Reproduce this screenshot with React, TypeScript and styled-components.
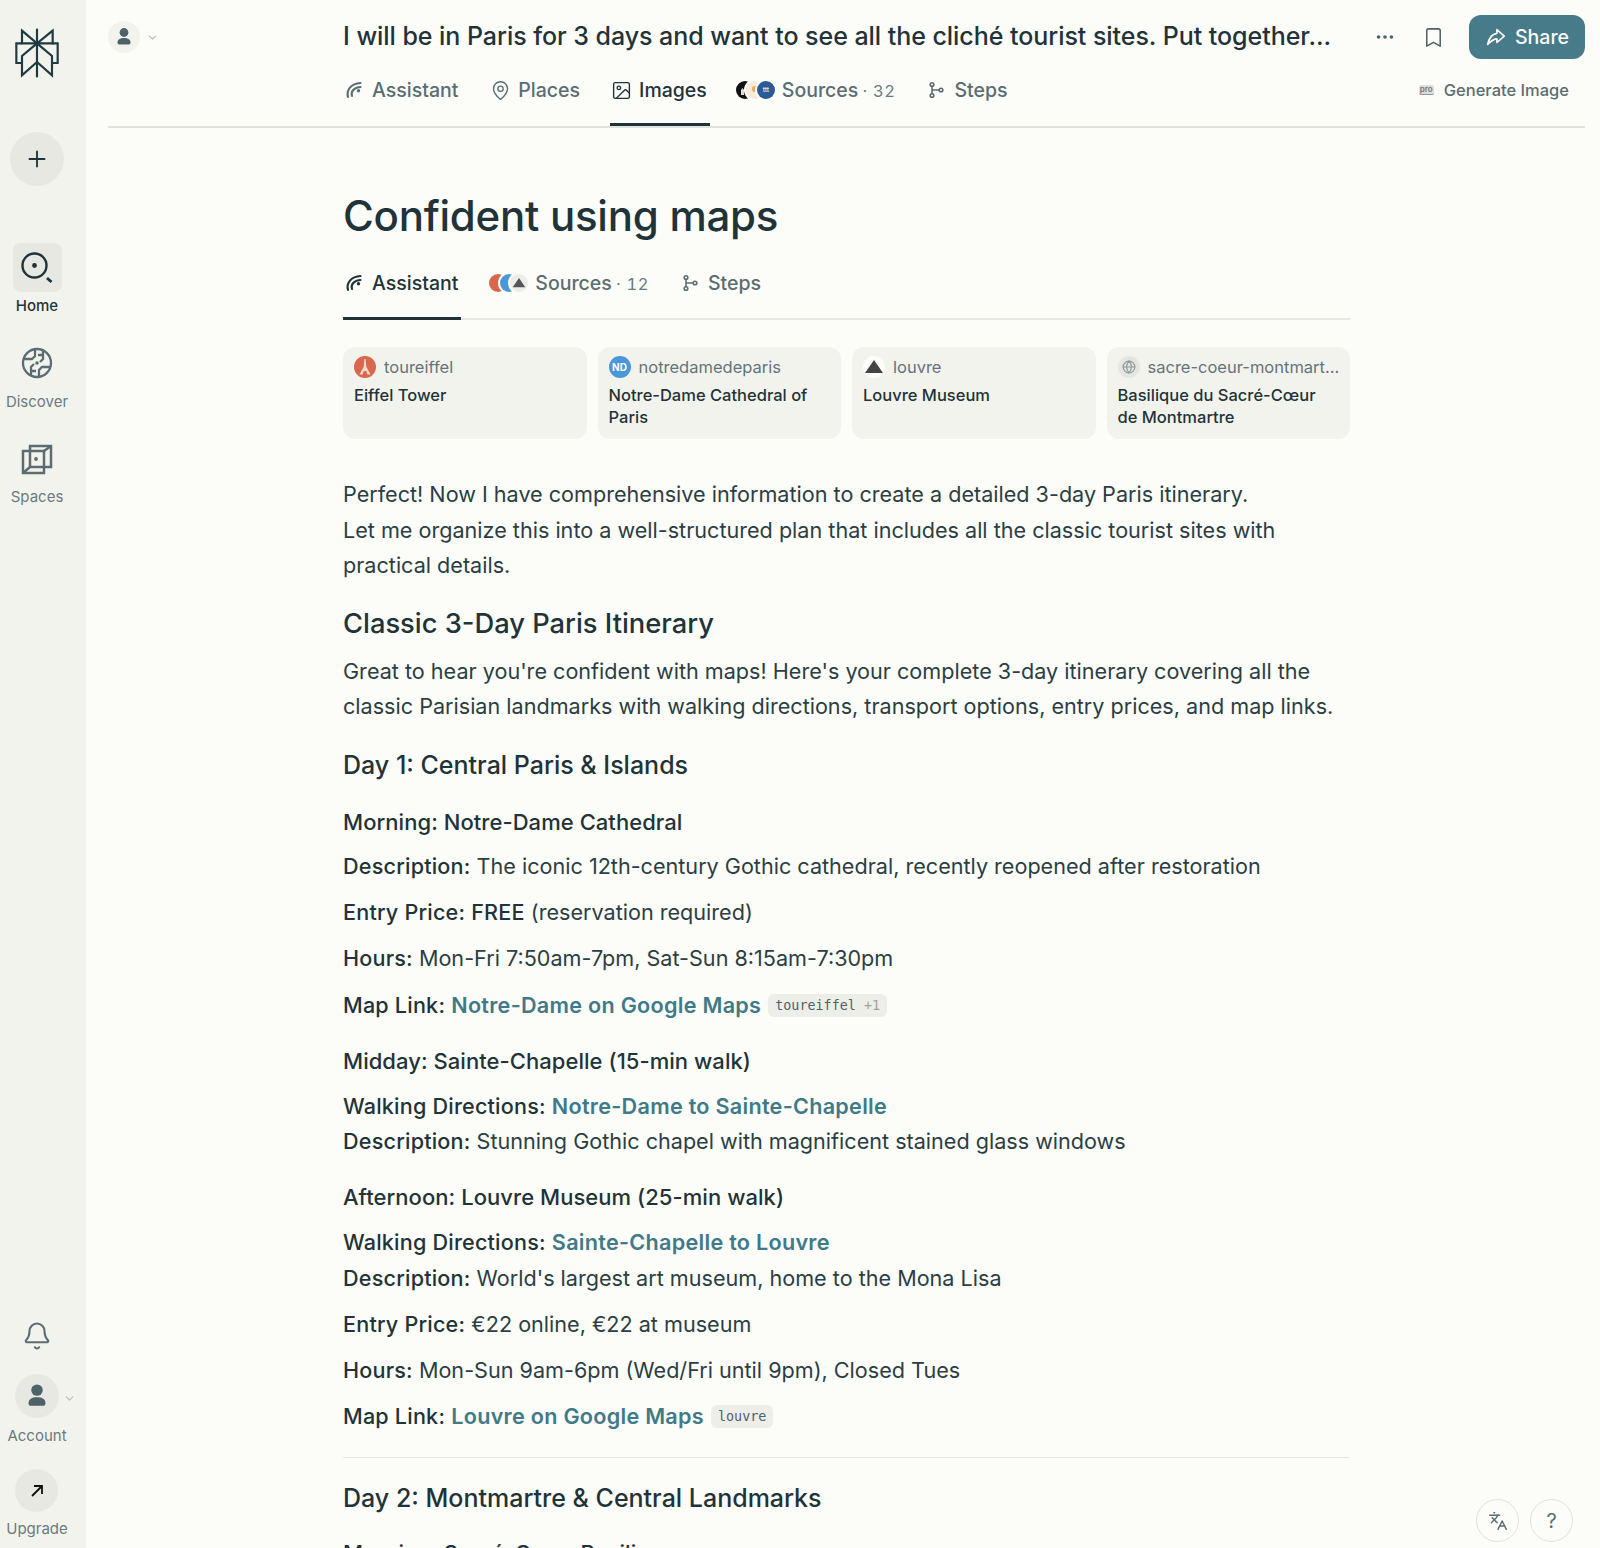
import React from "react"
import styled, { createGlobalStyle } from "styled-components"
import { Bell, Bookmark, ChevronDown, Ellipsis, Globe, Image, Languages, MapPin, Plus } from "lucide-react"

const GlobalStyle = createGlobalStyle`
  html, body {
    margin: 0;
    padding: 0;
    height: 1548px;
    overflow: hidden;
    background: #fcfcf9;
  }
  * { box-sizing: border-box; }
  body {
    font-family: Inter, "Liberation Sans", sans-serif;
    color: #1f3338;
  }
`

const Page = styled.div`
  display: flex;
  height: 1548px;
  overflow: hidden;
`

const Sidebar = styled.aside`
  position: relative;
  flex: 0 0 86px;
  display: flex;
  flex-direction: column;
  align-items: center;
  padding: 28px 12px 6px 0;
  background: #f3f3ee;
`

const Logo = styled.svg`
  display: block;
  width: 44px;
  height: 50px;
`

const NewButton = styled.div`
  display: flex;
  align-items: center;
  justify-content: center;
  width: 54px;
  height: 54px;
  margin-top: 54px;
  border-radius: 50%;
  background: #e8e8e3;
  color: #1f3338;
`

const Nav = styled.nav`
  display: flex;
  flex-direction: column;
  gap: 22.5px;
  margin-top: 57px;
`

const NavItem = styled.div`
  display: flex;
  flex-direction: column;
  align-items: center;
  gap: 4px;
`

const NavIcon = styled.div<{ $active?: boolean }>`
  display: flex;
  align-items: center;
  justify-content: center;
  width: 49px;
  height: 49px;
  border-radius: 8px;
  background: ${({ $active }) => ($active ? "#e8e8e3" : "transparent")};
  color: ${({ $active }) => ($active ? "#1f3338" : "#5b6d72")};
`

const NavLabel = styled.span<{ $active?: boolean }>`
  font-size: 15px;
  line-height: 20px;
  font-weight: ${({ $active }) => ($active ? 500 : 400)};
  color: ${({ $active }) => ($active ? "#1f3338" : "#6b7a7e")};
  white-space: nowrap;
`

const SideBottom = styled.div`
  display: flex;
  flex-direction: column;
  align-items: center;
  margin-top: auto;
`

const BellBox = styled.div`
  display: flex;
  align-items: center;
  justify-content: center;
  height: 40px;
  margin-bottom: 18px;
  color: #5b6d72;
`

const RoundIcon = styled.div<{ $size: number }>`
  display: flex;
  align-items: center;
  justify-content: center;
  width: ${({ $size }) => $size}px;
  height: ${({ $size }) => $size}px;
  border-radius: 50%;
  background: #e8e8e3;
  color: #4d6269;
`

const SideAction = styled.div<{ $gap: number }>`
  display: flex;
  flex-direction: column;
  align-items: center;
  gap: ${({ $gap }) => $gap}px;
  margin-bottom: 3px;
  & + & { margin-top: 20px; }
`

const SideChevron = styled.span`
  position: absolute;
  left: 63px;
  top: 1392px;
  color: #b5bcbc;
  display: flex;
`

const Main = styled.main`
  flex: 1;
  min-width: 0;
  padding: 0 15px 0 22px;
`

const Header = styled.header`
  border-bottom: 2px solid #e2e2dd;
  height: 128px;
`

const TopRow = styled.div`
  display: flex;
  align-items: center;
  height: 73px;
  padding-top: 1px;
`

const HeaderUser = styled.div`
  flex: 0 0 235px;
  display: flex;
  align-items: center;
  gap: 6px;
  color: #b5bcbc;
`

const UserCircle = styled.div`
  display: flex;
  align-items: center;
  justify-content: center;
  width: 32px;
  height: 32px;
  border-radius: 50%;
  background: #f3f3ee;
  color: #4d6269;
`

const ThreadTitle = styled.div`
  flex: 0 0 995px;
  font-size: 25px;
  line-height: 34px;
  font-weight: 500;
  letter-spacing: -0.045px;
  white-space: nowrap;
  overflow: hidden;
  margin-top: -2px;
`

const Actions = styled.div`
  display: flex;
  align-items: center;
  margin-left: auto;
  color: #4d6269;
`

const IconButton = styled.div`
  display: flex;
  align-items: center;
  justify-content: center;
  width: 24px;
  margin-right: 24px;
`

const ShareButton = styled.div`
  display: flex;
  align-items: center;
  justify-content: center;
  gap: 8px;
  width: 116px;
  height: 44px;
  border-radius: 12px;
  background: #477b8a;
  color: #fcfcf9;
  font-size: 19.5px;
  font-weight: 500;
`

const HeaderTabs = styled.div`
  display: flex;
  align-items: flex-start;
  height: 53px;
  padding-left: 235px;
`

const Tab = styled.div<{ $active?: boolean; $after?: number }>`
  display: flex;
  align-items: flex-start;
  gap: 9px;
  padding: 3px 3px 0 2px;
  height: 53px;
  margin-right: ${({ $after }) => $after ?? 26}px;
  font-size: 19.5px;
  line-height: 28px;
  font-weight: 500;
  color: ${({ $active }) => ($active ? "#1f3338" : "#5b6d72")};
  border-bottom: 3px solid ${({ $active }) => ($active ? "#1f3338" : "transparent")};
  > svg { flex: none; margin-top: 5px; }
`

const Count = styled.span`
  margin-left: -1px;
  font-size: 16.5px;
  font-weight: 400;
  font-variant-numeric: tabular-nums;
  color: #6b7a7e;
  letter-spacing: 0.6px;
`

const GenerateImage = styled.div`
  display: flex;
  align-items: center;
  gap: 10px;
  margin-left: auto;
  margin-right: 16px;
  height: 34px;
  font-size: 16.5px;
  font-weight: 500;
  color: #5b6d72;
`

const ProBadge = styled.span`
  width: 15px;
  height: 10px;
  border-radius: 2px;
  background: #deded9;
  border-bottom: 1.5px solid #8d999c;
  font-size: 8px;
  line-height: 9px;
  font-weight: 600;
  text-align: center;
  color: #6b7a7e;
`

const AvatarStack = styled.div`
  display: flex;
  margin-top: 5px;
  margin-right: -2px;
`

const Avatar = styled.span<{ $bg: string }>`
  display: flex;
  align-items: center;
  justify-content: center;
  width: 18px;
  height: 18px;
  border-radius: 50%;
  background: ${({ $bg }) => $bg};
  box-shadow: 0 0 0 2px #fcfcf9;
  color: #dfe6f0;
  font-size: 7px;
  letter-spacing: -0.2px;
  position: relative;
  & + & { margin-left: -7.5px; }
`

const Article = styled.div`
  width: 1007px;
  margin-left: 235px;
`

const Title = styled.h1`
  margin: 63px 0 0;
  font-size: 42px;
  line-height: 50px;
  font-weight: 500;
  letter-spacing: -0.25px;
`

const AnswerTabs = styled.div`
  display: flex;
  margin-top: 21px;
  border-bottom: 2px solid #e8e8e3;
`

const AnswerTab = styled(Tab)`
  height: 58px;
  padding-top: 7px;
  margin-bottom: -2px;
`

const Cards = styled.div`
  display: grid;
  grid-template-columns: repeat(4, minmax(0, 1fr));
  gap: 11px;
  margin-top: 27px;
`

const Card = styled.div`
  height: 92px;
  padding: 9px 11px;
  border-radius: 12px;
  background: #f3f3ee;
`

const CardSource = styled.div`
  display: flex;
  align-items: center;
  gap: 8px;
  height: 22px;
  font-size: 16.5px;
  color: #64747a;
  white-space: nowrap;
`

const Favicon = styled.span<{ $bg: string }>`
  flex: none;
  display: flex;
  align-items: center;
  justify-content: center;
  width: 22px;
  height: 22px;
  border-radius: 50%;
  background: ${({ $bg }) => $bg};
  color: #fff;
  font-size: 10px;
  font-weight: 700;
`

const CardTitle = styled.div`
  margin-top: 6px;
  font-size: 16.5px;
  line-height: 22px;
  font-weight: 500;
`

const Prose = styled.div`
  margin-top: 38px;
  font-size: 21.6px;
  line-height: 35.5px;
  color: #2b3e43;
`

const Para = styled.p<{ $gap?: number }>`
  margin: ${({ $gap }) => $gap ?? 10.7}px 0 0;
  strong { font-weight: 500; color: #1f3338; letter-spacing: 0.2px; }
`

const Heading2 = styled.h2`
  margin: 22px 0 0;
  font-size: 27.3px;
  line-height: 36px;
  font-weight: 500;
  color: #1f3338;
`

const Heading3 = styled.h3`
  margin: 24px 0 0;
  font-size: 25px;
  line-height: 32px;
  font-weight: 500;
  color: #1f3338;
`

const Subhead = styled.h4<{ $gap: number }>`
  margin: ${({ $gap }) => $gap}px 0 0;
  font-size: 22px;
  line-height: 35.5px;
  font-weight: 500;
  letter-spacing: 0.05px;
  color: #1f3338;
`

const Link = styled.a`
  color: #3f7a88;
  font-weight: 600;
  letter-spacing: 0.28px;
`

const Chip = styled.span`
  display: inline-block;
  margin-left: 7px;
  padding: 0 7px;
  height: 23px;
  border-radius: 6px;
  background: #eeeee9;
  font-family: "DejaVu Sans Mono", "Liberation Mono", monospace;
  font-size: 13.4px;
  line-height: 23px;
  vertical-align: 3px;
  color: #4d6269;
  em { font-style: normal; color: #9aa4a6; }
`

const Rule = styled.hr`
  margin: 22px 0 0;
  border: 0;
  border-top: 1.5px solid #e8e8e3;
`

const FloatButtons = styled.div`
  position: absolute;
  right: 27px;
  bottom: 6px;
  display: flex;
  gap: 11px;
`

const FloatButton = styled.div`
  display: flex;
  align-items: center;
  justify-content: center;
  width: 43px;
  height: 43px;
  border-radius: 50%;
  background: #fcfcf9;
  border: 1.5px solid #e2e2dd;
  color: #5b6d72;
  font-size: 20px;
`

const TabGlyph = styled.svg`
  && { margin: 3.5px -1.5px 0; }
`

function PerplexityLogo() {
  return (
    <Logo viewBox="44 82 132 150" fill="none" stroke="#1f3a40" strokeWidth="6.5">
      <path d="M110 84V230" />
      <path d="M65 90 110 128H65Z" />
      <path d="M157 90 110 128h47Z" />
      <path d="M65 128H48v59h17M155 128h17v59h-17" />
      <path d="M110 128 65 166v58l45-40M110 128l45 38v58l-45-40" />
    </Logo>
  )
}

function PersonIcon({ size }: { size: number }) {
  return (
    <svg width={size} height={size} viewBox="0 0 20 20" fill="currentColor">
      <circle cx="10" cy="5.500" r="4.400" />
      <path d="M3.500 15.500c0-3 2.500-4.500 6.500-4.500s6.500 1.500 6.500 4.500c0 1.300-.7 2-2 2h-9c-1.300 0-2-.7-2-2z" />
    </svg>
  )
}

function HomeIcon() {
  return (
    <svg width="32" height="32" viewBox="0 0 32 32" fill="none" stroke="currentColor" strokeWidth="2.400">
      <circle cx="13.500" cy="13.500" r="12" />
      <circle cx="13.500" cy="13.500" r="2.400" fill="currentColor" stroke="none" />
      <path d="M26 26l4.500 4" strokeWidth="2.800" />
    </svg>
  )
}

function DiscoverIcon() {
  return (
    <svg width="32" height="32" viewBox="0 0 32 32" fill="none" stroke="currentColor" strokeWidth="2.300">
      <circle cx="16" cy="16" r="14" />
      <path d="M3 12h8l3-3V3M29 20h-8l-3 3v6M10 29v-9l3-3M22 3v9l-3 3M17 8h5M10 24h5" />
      <circle cx="16" cy="16" r="1.800" fill="currentColor" stroke="none" />
    </svg>
  )
}

function SpacesIcon() {
  return (
    <svg width="32" height="32" viewBox="0 0 32 32" fill="none" stroke="currentColor" strokeWidth="2.500">
      <path d="M9 8V3h21v21h-7" />
      <path d="M2 8h21v22H2z" />
      <path d="M23 8l7-5M2 30l7-6h14" />
      <path d="M9 8v16" />
      <circle cx="15" cy="16" r="1.900" fill="currentColor" stroke="none" />
    </svg>
  )
}

function AssistantIcon() {
  return (
    <svg width="18" height="18" viewBox="0 0 18 18" fill="none" stroke="currentColor" strokeWidth="2.100" strokeLinecap="round">
      <path d="M3 16C1 9 6 2.500 15.500 2" />
      <path d="M7 15C5.500 10.500 9 6.500 15.500 6" />
      <circle cx="13.500" cy="9.800" r="1.700" fill="currentColor" stroke="none" />
    </svg>
  )
}

function StepsIcon() {
  return (
    <svg width="18" height="18" viewBox="0 0 18 18" fill="none" stroke="currentColor" strokeWidth="1.600">
      <circle cx="5" cy="3.500" r="1.800" />
      <circle cx="5" cy="14.500" r="1.800" />
      <circle cx="14" cy="9" r="1.800" />
      <path d="M5 5.300v7.400M5 9c1.500 0 3-.1 7.200 0" />
    </svg>
  )
}

function ShareIcon() {
  return (
    <svg width="22" height="22" viewBox="0 0 24 24" fill="none" stroke="currentColor" strokeWidth="1.800" strokeLinejoin="round">
      <path d="M13 4v4c-6.575 1.028-9.020 6.788-10 12-.037.206 5.384-5.962 10-6v4l8-7z" />
    </svg>
  )
}

function TowerIcon() {
  return (
    <svg width="14" height="16" viewBox="0 0 14 16" fill="#f6d9cf">
      <path d="M6.400 0h1.200l.8 8 4.100 7.500h-3L8.200 12H5.800l-1.300 3.500h-3L5.600 8z" />
    </svg>
  )
}

function PyramidIcon({ size, color }: { size: number; color: string }) {
  return (
    <svg width={size} height={size} viewBox="0 0 20 20" fill={color}>
      <path d="M10 3 19 16H1z" />
    </svg>
  )
}

function MoonMark() {
  return (
    <svg width="18" height="18" viewBox="0 0 18 18">
      <path d="M5 14V9l1.500-2L8 9v5z" fill="#ddd" />
    </svg>
  )
}

function SunMark() {
  return (
    <svg width="18" height="18" viewBox="0 0 18 18">
      <circle cx="9" cy="8" r="3" fill="#eca85c" />
    </svg>
  )
}

export default function App() {
  return (
    <Page>
      <GlobalStyle />
      <Sidebar>
        <PerplexityLogo />
        <NewButton>
          <Plus size={26} strokeWidth={1.7} />
        </NewButton>
        <Nav>
          <NavItem>
            <NavIcon $active><HomeIcon /></NavIcon>
            <NavLabel $active>Home</NavLabel>
          </NavItem>
          <NavItem>
            <NavIcon><DiscoverIcon /></NavIcon>
            <NavLabel>Discover</NavLabel>
          </NavItem>
          <NavItem>
            <NavIcon><SpacesIcon /></NavIcon>
            <NavLabel>Spaces</NavLabel>
          </NavItem>
        </Nav>
        <SideBottom>
          <BellBox><Bell size={30} strokeWidth={1.7} /></BellBox>
          <SideAction $gap={8}>
            <RoundIcon $size={44}><PersonIcon size={26} /></RoundIcon>
            <NavLabel>Account</NavLabel>
          </SideAction>
          <SideAction $gap={7}>
            <RoundIcon $size={43}>
              <svg width="14" height="14" viewBox="0 0 14 14" fill="none" stroke="#111" strokeWidth="1.800">
                <path d="M2 12 12 2M4 2h8v8" />
              </svg>
            </RoundIcon>
            <NavLabel>Upgrade</NavLabel>
          </SideAction>
        </SideBottom>
        <SideChevron><ChevronDown size={13} /></SideChevron>
      </Sidebar>
      <Main>
        <Header>
          <TopRow>
            <HeaderUser>
              <UserCircle><PersonIcon size={20} /></UserCircle>
              <ChevronDown size={13} />
            </HeaderUser>
            <ThreadTitle>I will be in Paris for 3 days and want to see all the cliché tourist sites. Put together...</ThreadTitle>
            <Actions>
              <IconButton><Ellipsis size={22} /></IconButton>
              <IconButton><Bookmark size={23} strokeWidth={1.6} /></IconButton>
              <ShareButton><ShareIcon />Share</ShareButton>
            </Actions>
          </TopRow>
          <HeaderTabs>
            <Tab $after={28}><AssistantIcon />Assistant</Tab>
            <Tab $after={27}><TabGlyph as={MapPin} size={21} strokeWidth={1.6} />Places</Tab>
            <Tab $active $after={24}><TabGlyph as={Image} size={21} strokeWidth={1.6} />Images</Tab>
            <Tab $after={27}>
              <AvatarStack>
                <Avatar $bg="#111"><MoonMark /></Avatar>
                <Avatar $bg="#f6ead8"><SunMark /></Avatar>
                <Avatar $bg="#2c5a94">ttt</Avatar>
              </AvatarStack>
              <span>Sources <Count>· 32</Count></span>
            </Tab>
            <Tab><StepsIcon />Steps</Tab>
            <GenerateImage><ProBadge>pro</ProBadge>Generate Image</GenerateImage>
          </HeaderTabs>
        </Header>
        <Article>
          <Title>Confident using maps</Title>
          <AnswerTabs>
            <AnswerTab $active><AssistantIcon />Assistant</AnswerTab>
            <AnswerTab $after={27}>
              <AvatarStack>
                <Avatar $bg="#d9674e" />
                <Avatar $bg="#4a97d9" />
                <Avatar $bg="#ecece8"><PyramidIcon size={14} color="#555" /></Avatar>
              </AvatarStack>
              <span>Sources <Count>· 12</Count></span>
            </AnswerTab>
            <AnswerTab><StepsIcon />Steps</AnswerTab>
          </AnswerTabs>
          <Cards>
            <Card>
              <CardSource><Favicon $bg="#d9674e"><TowerIcon /></Favicon>toureiffel</CardSource>
              <CardTitle>Eiffel Tower</CardTitle>
            </Card>
            <Card>
              <CardSource><Favicon $bg="#4a97d9">ND</Favicon>notredamedeparis</CardSource>
              <CardTitle>Notre-Dame Cathedral of Paris</CardTitle>
            </Card>
            <Card>
              <CardSource><Favicon $bg="#fcfcf9"><PyramidIcon size={20} color="#444" /></Favicon>louvre</CardSource>
              <CardTitle>Louvre Museum</CardTitle>
            </Card>
            <Card>
              <CardSource><Favicon $bg="#e6e6e1"><Globe size={14} color="#8d999c" /></Favicon>sacre-coeur-montmart…</CardSource>
              <CardTitle>Basilique du Sacré-Cœur de Montmartre</CardTitle>
            </Card>
          </Cards>
          <Prose>
            <Para $gap={0}>
              Perfect! Now I have comprehensive information to create a detailed 3-day Paris itinerary.<br />
              Let me organize this into a well-structured plan that includes all the classic tourist sites with practical details.
            </Para>
            <Heading2>Classic 3-Day Paris Itinerary</Heading2>
            <Para $gap={12}>
              Great to hear you're confident with maps! Here's your complete 3-day itinerary covering all the classic Parisian landmarks with walking directions, transport options, entry prices, and map links.
            </Para>
            <Heading3>Day 1: Central Paris &amp; Islands</Heading3>
            <Subhead $gap={24}>Morning: Notre-Dame Cathedral</Subhead>
            <Para $gap={9}><strong>Description:</strong> The iconic 12th-century Gothic cathedral, recently reopened after restoration</Para>
            <Para><strong>Entry Price: FREE</strong> (reservation required)</Para>
            <Para><strong>Hours:</strong> Mon-Fri 7:50am-7pm, Sat-Sun 8:15am-7:30pm</Para>
            <Para><strong>Map Link:</strong> <Link>Notre-Dame on Google Maps</Link><Chip>toureiffel <em>+1</em></Chip></Para>
            <Subhead $gap={21}>Midday: Sainte-Chapelle (15-min walk)</Subhead>
            <Para $gap={9}>
              <strong>Walking Directions:</strong> <Link>Notre-Dame to Sainte-Chapelle</Link><br />
              <strong>Description:</strong> Stunning Gothic chapel with magnificent stained glass windows
            </Para>
            <Subhead $gap={20}>Afternoon: Louvre Museum (25-min walk)</Subhead>
            <Para $gap={10}>
              <strong>Walking Directions:</strong> <Link>Sainte-Chapelle to Louvre</Link><br />
              <strong>Description:</strong> World's largest art museum, home to the Mona Lisa
            </Para>
            <Para><strong>Entry Price:</strong> €22 online, €22 at museum</Para>
            <Para><strong>Hours:</strong> Mon-Sun 9am-6pm (Wed/Fri until 9pm), Closed Tues</Para>
            <Para><strong>Map Link:</strong> <Link>Louvre on Google Maps</Link><Chip>louvre</Chip></Para>
            <Rule />
            <Heading3>Day 2: Montmartre &amp; Central Landmarks</Heading3>
            <Subhead $gap={22}>Morning: Sacré-Cœur Basilica</Subhead>
          </Prose>
        </Article>
      </Main>
      <FloatButtons>
        <FloatButton><Languages size={20} strokeWidth={1.7} /></FloatButton>
        <FloatButton>?</FloatButton>
      </FloatButtons>
    </Page>
  )
}
